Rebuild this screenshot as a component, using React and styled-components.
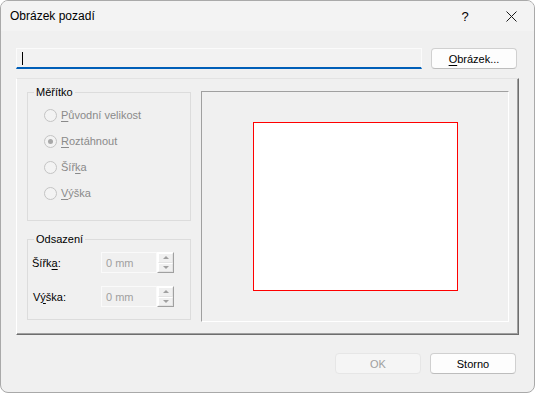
import React from 'react';
import styled, { createGlobalStyle } from 'styled-components';

const FONT = '"Liberation Sans", Arial, sans-serif';

const Global = createGlobalStyle`
  html, body { margin: 0; padding: 0; background: #ffffff; }
  body { font-family: ${FONT}; font-size: 11px; color: #000; }
  * { box-sizing: border-box; }
`;

const Window = styled.div`
  width: 535px;
  height: 393px;
  border: 1px solid #a9a9a9;
  border-radius: 8px;
  background: #f0f0f0;
  display: flex;
  flex-direction: column;
  overflow: hidden;
`;

const TitleBar = styled.div`
  height: 30px;
  display: flex;
  align-items: center;
  background: #f3f3f3;
  padding-left: 9px;
`;

const Title = styled.div`
  flex: 1;
  font-size: 12px;
  line-height: 16px;
`;

const TitleButton = styled.div`
  width: 46px;
  height: 30px;
  display: flex;
  align-items: center;
  justify-content: center;
  font-size: 13px;
`;

const Body = styled.div`
  flex: 1;
  display: flex;
  flex-direction: column;
  padding: 17px 15px 0 15px;
`;

const TopRow = styled.div`
  display: flex;
  align-items: flex-start;
  gap: 9px;
  padding-right: 2px;
`;

const TextField = styled.div`
  width: 406px;
  height: 21px;
  background: #f2f2f2;
  border: 1px solid #fbfbfb;
  border-bottom: 2px solid #005fb8;
  display: flex;
  align-items: center;
  padding-left: 5px;
`;

const Caret = styled.span`
  width: 1px;
  height: 13px;
  background: #000;
`;

const Button = styled.button`
  width: 86px;
  height: 21px;
  padding: 0;
  border: 1px solid ${p => (p.disabled ? '#e6e6e6' : '#d0d0d0')};
  border-bottom-color: ${p => (p.disabled ? '#e6e6e6' : '#bdbdbd')};
  border-radius: 4px;
  background: ${p => (p.disabled ? '#f5f5f5' : '#fdfdfd')};
  color: ${p => (p.disabled ? '#a0a0a0' : '#000')};
  font-family: ${FONT};
  font-size: 11px;
  line-height: 16px;
`;

const Key = styled.span`
  text-decoration: underline;
  text-underline-offset: 2px;
`;

const MainFrame = styled.div`
  margin-top: 9px;
  width: 503px;
  height: 257px;
  border-top: 1px solid #e3e3e3;
  border-left: 1px solid #ffffff;
  border-right: 1px solid #6e6e6e;
  border-bottom: 1px solid #6e6e6e;
  box-shadow: inset -1px -1px 0 #a0a0a0;
  display: flex;
  align-items: flex-start;
  padding-left: 10px;
`;

const LeftCol = styled.div`
  width: 164px;
  margin-top: 13px;
  display: flex;
  flex-direction: column;
  gap: 18px;
`;

const Group = styled.div`
  position: relative;
  height: ${p => p.$h}px;
  border: 1px solid #dcdcdc;
  padding-top: ${p => p.$pt}px;
`;

const Legend = styled.span`
  position: absolute;
  top: -8px;
  left: 6px;
  padding: 0 2px;
  background: #f0f0f0;
  line-height: 14px;
`;

const RadioRow = styled.div`
  height: 26px;
  display: flex;
  align-items: center;
  padding-left: 16px;
  gap: 4px;
  color: #8a8a8a;
`;

const RadioCircle = styled.span`
  width: 13px;
  height: 13px;
  border-radius: 50%;
  border: 1px solid #c4c4c4;
  background: #f3f3f3;
  display: flex;
  align-items: center;
  justify-content: center;
  &::after {
    content: '';
    width: 5px;
    height: 5px;
    border-radius: 50%;
    background: ${p => (p.$checked ? '#a8a8a8' : 'transparent')};
  }
`;

const FieldRows = styled.div`
  display: flex;
  flex-direction: column;
  gap: 13px;
  padding-left: 4px;
`;

const FieldRow = styled.div`
  display: flex;
  align-items: center;
  height: 21px;
`;

const FieldLabel = styled.span`
  width: ${p => p.$w}px;
  padding-left: ${p => p.$pl || 0}px;
`;

const SpinInput = styled.div`
  width: 56px;
  height: 21px;
  border: 1px solid #fafafa;
  color: #a0a0a0;
  display: flex;
  align-items: center;
  padding-left: 4px;
`;

const SpinButtons = styled.div`
  width: 17px;
  height: 21px;
  display: flex;
  flex-direction: column;
  border: 1px solid #ffffff;
  border-right-color: #a0a0a0;
  border-bottom-color: #a0a0a0;
`;

const SpinBtn = styled.div`
  flex: 1;
  display: flex;
  align-items: center;
  justify-content: center;
  border: 1px solid #e3e3e3;
  border-top-color: #fff;
  border-left-color: #fff;
  &::after {
    content: '';
    width: 0;
    height: 0;
    border-left: 3px solid transparent;
    border-right: 3px solid transparent;
    ${p => (p.$down ? 'border-top: 3px solid #a0a0a0;' : 'border-bottom: 3px solid #a0a0a0;')}
  }
`;

const Preview = styled.div`
  margin-top: 12px;
  margin-left: 10px;
  width: 308px;
  height: 231px;
  border-top: 1px solid #a0a0a0;
  border-left: 1px solid #a0a0a0;
  border-right: 1px solid #ffffff;
  border-bottom: 1px solid #ffffff;
  display: flex;
  align-items: center;
  justify-content: center;
`;

const Page = styled.div`
  width: 205px;
  height: 169px;
  background: #ffffff;
  border: 1px solid #ff0000;
`;

const Footer = styled.div`
  margin-top: 18px;
  display: flex;
  justify-content: flex-end;
  gap: 9px;
  padding-right: 3px;
`;

const CloseIcon = () => (
  <svg width="11" height="11" viewBox="0 0 11 11">
    <path d="M0.5 0.5 L10.5 10.5 M10.5 0.5 L0.5 10.5" stroke="#1a1a1a" strokeWidth="1" fill="none" />
  </svg>
);

const Spin = () => (
  <>
    <SpinInput>0 mm</SpinInput>
    <SpinButtons>
      <SpinBtn />
      <SpinBtn $down />
    </SpinButtons>
  </>
);

export default function App() {
  return (
    <>
      <Global />
      <Window>
        <TitleBar>
          <Title>Obrázek pozadí</Title>
          <TitleButton>?</TitleButton>
          <TitleButton><CloseIcon /></TitleButton>
        </TitleBar>
        <Body>
          <TopRow>
            <TextField><Caret /></TextField>
            <Button><Key>O</Key>brázek...</Button>
          </TopRow>
          <MainFrame>
            <LeftCol>
              <Group $h={129} $pt={9}>
                <Legend>Měřítko</Legend>
                <RadioRow><RadioCircle /><span><Key>P</Key>ůvodní velikost</span></RadioRow>
                <RadioRow><RadioCircle $checked /><span><Key>R</Key>oztáhnout</span></RadioRow>
                <RadioRow><RadioCircle /><span>Šíř<Key>k</Key>a</span></RadioRow>
                <RadioRow><RadioCircle /><span><Key>V</Key>ýška</span></RadioRow>
              </Group>
              <Group $h={81} $pt={12}>
                <Legend>Odsazení</Legend>
                <FieldRows>
                  <FieldRow>
                    <FieldLabel $w={69}>Šířk<Key>a</Key>:</FieldLabel>
                    <Spin />
                  </FieldRow>
                  <FieldRow>
                    <FieldLabel $w={69} $pl={1}>V<Key>ý</Key>ška:</FieldLabel>
                    <Spin />
                  </FieldRow>
                </FieldRows>
              </Group>
            </LeftCol>
            <Preview>
              <Page />
            </Preview>
          </MainFrame>
          <Footer>
            <Button disabled>OK</Button>
            <Button>Storno</Button>
          </Footer>
        </Body>
      </Window>
    </>
  );
}
